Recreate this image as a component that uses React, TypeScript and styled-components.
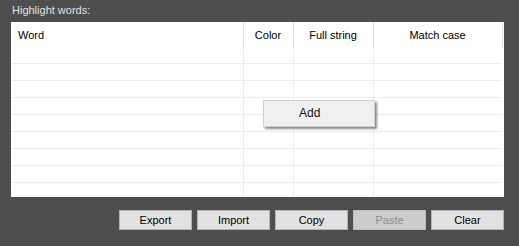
import React from 'react';
import styled, { createGlobalStyle } from 'styled-components';

const Global = createGlobalStyle`
  html, body { margin: 0; padding: 0; background: #4e4e4e; }
  body { font-family: "Liberation Sans", Arial, sans-serif; font-size: 11px; }
`

const Panel = styled.div`
  width: 519px;
  height: 246px;
  box-sizing: border-box;
  background: #4e4e4e;
  padding: 0 15px 0 11px;
  display: flex;
  flex-direction: column;
`

const Title = styled.div`
  height: 22px;
  line-height: 20px;
  color: #e2e2e2;
  padding-left: 1px;
`

const GridBox = styled.div`
  position: relative;
  height: 175px;
  background: #fff;
  overflow: hidden;
`

const Grid = styled.table`
  border-collapse: collapse;
  table-layout: fixed;
  width: 491px;
  color: #000;
  th {
    height: 25px;
    padding: 0;
    font-weight: normal;
    text-align: center;
    border-right: 1px solid #dedede;
    &:first-child { text-align: left; padding-left: 7px; }
  }
  td {
    height: 16px;
    padding: 0;
    border-bottom: 1px solid #ececec;
    border-right: 1px solid #ececec;
    &:last-child { border-right: none; }
  }
`

const Popup = styled.div`
  position: absolute;
  left: 252px;
  top: 78px;
  width: 110px;
  height: 25px;
  background: #f0f0f0;
  border: 1px solid #cfcfcf;
  box-shadow: 2px 2px 2px rgba(0, 0, 0, 0.45);
  font-size: 12px;
  line-height: 25px;
  color: #111;
  padding-left: 35px;
  box-sizing: content-box;
  width: 75px;
`

const Buttons = styled.div`
  display: flex;
  justify-content: flex-end;
  gap: 5px;
  margin-top: 13px;
`

const Button = styled.button<{ $disabled?: boolean }>`
  width: 73px;
  height: 20px;
  box-sizing: border-box;
  margin: 0;
  padding: 0;
  font-family: "Liberation Sans", Arial, sans-serif;
  font-size: 11px;
  color: ${p => (p.$disabled ? '#8c8c8c' : '#000')};
  background: ${p => (p.$disabled ? '#cdcdcd' : '#e1e1e1')};
  border: 1px solid ${p => (p.$disabled ? '#bfbfbf' : '#b4b4b4')};
`

const rows = Array.from({ length: 9 })

export default function App() {
  return (
    <Panel>
      <Global />
      <Title>Highlight words:</Title>
      <GridBox>
        <Grid>
          <colgroup>
            <col style={{ width: 232 }} />
            <col style={{ width: 50 }} />
            <col style={{ width: 80 }} />
            <col style={{ width: 129 }} />
          </colgroup>
          <thead>
            <tr>
              <th>Word</th>
              <th>Color</th>
              <th>Full string</th>
              <th>Match case</th>
            </tr>
          </thead>
          <tbody>
            {rows.map((_, i) => (
              <tr key={i}>
                <td /><td /><td /><td />
              </tr>
            ))}
          </tbody>
        </Grid>
        <Popup>Add</Popup>
      </GridBox>
      <Buttons>
        <Button>Export</Button>
        <Button>Import</Button>
        <Button>Copy</Button>
        <Button $disabled>Paste</Button>
        <Button>Clear</Button>
      </Buttons>
    </Panel>
  )
}
